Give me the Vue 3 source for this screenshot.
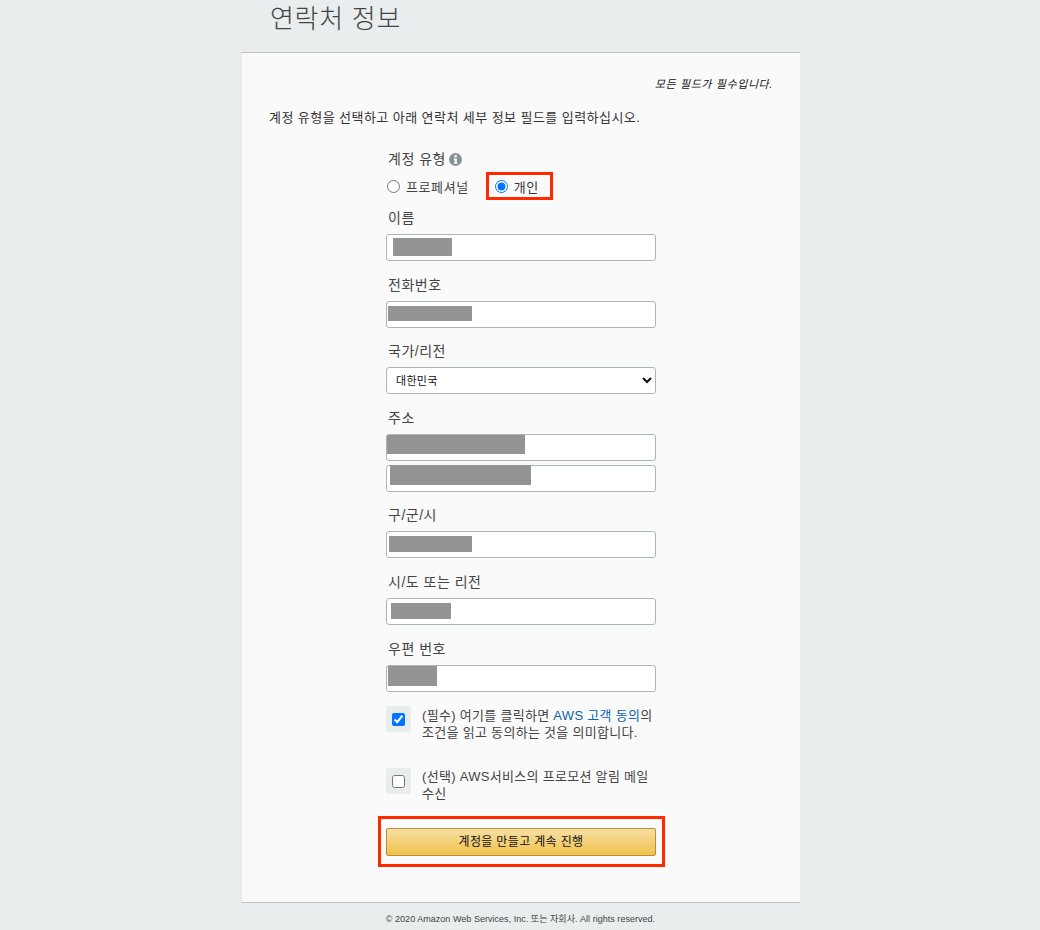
<template>
  <div class="page">
    <h1 class="title">연락처 정보</h1>
    <section class="card">
      <p class="required">모든 필드가 필수입니다.</p>
      <p class="intro">계정 유형을 선택하고 아래 연락처 세부 정보 필드를 입력하십시오.</p>

      <form class="form" @submit.prevent>
        <div class="type-label">
          계정 유형
          <svg class="info" viewBox="0 0 12 12" width="13" height="13">
            <circle cx="6" cy="6" r="6" fill="#879196" />
            <rect x="5" y="2" width="2.2" height="2" fill="#fff" />
            <path d="M4.3 5h2.9v3.9h.8V10H4.3V8.9h.8V6.1h-.8z" fill="#fff" />
          </svg>
        </div>
        <div class="radios">
          <label class="radio"><input type="radio" name="kind" /> 프로페셔널</label>
          <label class="radio radio-on"><input type="radio" name="kind" checked /> 개인</label>
        </div>

        <div v-for="f in fields" :key="f.label" class="field">
          <label class="field-label">{{ f.label }}</label>
          <div v-for="(box, i) in f.boxes" :key="i" class="box">
            <input type="text" class="text-input" />
            <span class="redact" :style="{ left: box[0] + 'px', top: box[1] + 'px', width: box[2] + 'px', height: box[3] + 'px' }"></span>
          </div>
          <select v-if="f.select" class="select">
            <option>대한민국</option>
          </select>
        </div>

        <div class="check-row first">
          <span class="check-box"><input type="checkbox" checked /></span>
          <p>(필수) 여기를 클릭하면 <a href="#">AWS 고객 동의</a>의 조건을 읽고 동의하는 것을 의미합니다.</p>
        </div>
        <div class="check-row second">
          <span class="check-box"><input type="checkbox" /></span>
          <p>(선택) AWS서비스의 프로모션 알림 메일 수신</p>
        </div>

        <div class="submit-wrap">
          <button class="submit" type="submit">계정을 만들고 계속 진행</button>
        </div>
      </form>
    </section>
    <footer class="footer">© 2020 Amazon Web Services, Inc. 또는 자회사. All rights reserved.</footer>
  </div>
</template>

<script setup>
const fields = [
  { label: '이름', boxes: [[7, 4, 59, 18]] },
  { label: '전화번호', boxes: [[2, 5, 84, 15]] },
  { label: '국가/리전', boxes: [], select: true },
  { label: '주소', boxes: [[1, 1, 138, 19], [4, 0, 141, 20]] },
  { label: '구/군/시', boxes: [[3, 5, 83, 16]] },
  { label: '시/도 또는 리전', boxes: [[5, 5, 60, 16]] },
  { label: '우편 번호', boxes: [[2, 1, 49, 20]] }
]
</script>

<style>
html, body {
  background: #e9eded;
}
</style>

<style scoped>
.page {
  width: 559px;
  margin-left: 241px;
  height: 930px;
  overflow: hidden;
  font-family: Arial, "Liberation Sans", "Noto Sans CJK KR", sans-serif;
  color: #444;
  font-size: 13px;
}

.title {
  margin: 0;
  height: 52px;
  padding: 1px 0 0 29px;
  box-sizing: border-box;
  font-size: 26px;
  line-height: 36px;
  font-weight: 300;
  color: #444;
  letter-spacing: 0.7px;
}

.card {
  box-sizing: border-box;
  height: 851px;
  background: #fafafa;
  border-top: 1px solid #c0c0c0;
  border-bottom: 1px solid #c0c0c0;
  border-left: 1px solid #e4e6e8;
  padding: 24px 27px 0 27px;
}

.required {
  margin: 0;
  text-align: right;
  font-size: 11px;
  line-height: 14px;
  font-style: italic;
  letter-spacing: 0.6px;
  color: #111;
}

.intro {
  margin: 18px 0 0;
  font-size: 13px;
  line-height: 18px;
  letter-spacing: 0.44px;
  color: #333;
}

.form {
  width: 270px;
  margin: 22px 0 0 117px;
}

.type-label {
  padding-left: 2px;
  line-height: 20px;
  display: flex;
  align-items: center;
  gap: 3px;
  white-space: nowrap;
  font-size: 14px;
  letter-spacing: 0.5px;
}

.info {
  flex: none;
}

.radios {
  display: flex;
  align-items: center;
  height: 28px;
  margin-top: 3px;
  margin-bottom: 9px;
  padding-left: 1px;
  letter-spacing: 0.6px;
}

.radio {
  display: flex;
  align-items: center;
  gap: 6px;
  white-space: nowrap;
}

.radio input {
  margin: 0;
  width: 13px;
  height: 13px;
}

.radio-on {
  margin-left: 17px;
  height: 28px;
  box-sizing: border-box;
  border: 3px solid #ff2a00;
  padding: 0 11px 0 6px;
  color: #333;
}

.field {
  margin-top: 7px;
  margin-bottom: 14.6px;
}

.field-label {
  display: block;
  padding-left: 2px;
  line-height: 19px;
  margin-bottom: 7px;
  height: 18px;
  font-size: 14px;
  letter-spacing: 0.5px;
  color: #444;
}

.box {
  position: relative;
  height: 27px;
}

.box + .box {
  margin-top: 4px;
}

.text-input,
.select {
  display: block;
  width: 100%;
  height: 27px;
  box-sizing: border-box;
  margin: 0;
  border: 1px solid #aab7b8;
  border-radius: 3px;
  background: #fff;
  font-family: inherit;
  font-size: 11px;
  letter-spacing: 0.3px;
  color: #111;
}

.select {
  padding-left: 5px;
}

.redact {
  position: absolute;
  background: #949494;
}

.check-row {
  display: flex;
  gap: 11px;
}

.check-row p {
  margin: 0;
  line-height: 17px;
  padding-top: 1px;
  letter-spacing: 0.3px;
  color: #444;
}

.check-row a {
  color: #0b63a8;
  text-decoration: none;
}

.second {
  margin-top: 27px;
}

.second p {
  padding-top: 0;
}

.check-box {
  flex: none;
  width: 25px;
  height: 26px;
  border-radius: 3px;
  background: #e9eded;
  display: flex;
  align-items: center;
  justify-content: center;
}

.check-box input {
  margin: 0;
  width: 13px;
  height: 13px;
}

.submit-wrap {
  box-sizing: border-box;
  width: 287px;
  height: 51px;
  margin: 14px 0 0 -8px;
  border: 3px solid #ff2a00;
  padding: 9px 6px 0 5px;
}

.submit {
  display: block;
  width: 100%;
  height: 28px;
  box-sizing: border-box;
  border: 1px solid #b98f36;
  border-radius: 2px;
  background: linear-gradient(#f7dfa5, #f0c14b);
  font-family: inherit;
  font-size: 12px;
  letter-spacing: 0.35px;
  color: #111;
  padding: 0 0 3px;
}

.footer {
  text-align: center;
  font-size: 9px;
  line-height: 14px;
  padding-top: 9px;
  letter-spacing: 0.03px;
  color: #444;
}
</style>
